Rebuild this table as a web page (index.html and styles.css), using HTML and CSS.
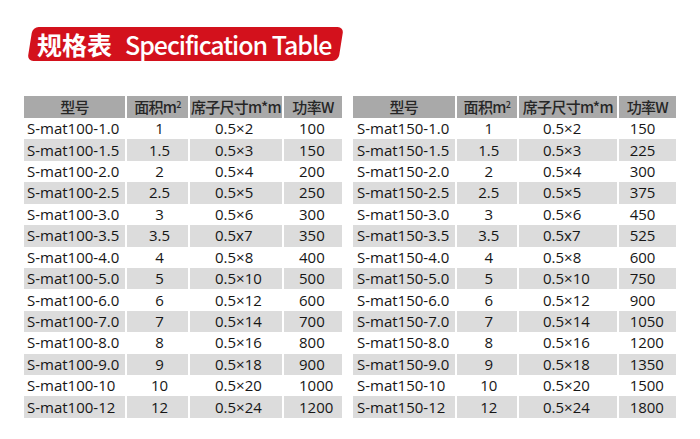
FILE: index.html
```html
<!DOCTYPE html>
<html lang="zh">
<head>
<meta charset="utf-8">
<title>规格表 Specification Table</title>
<link rel="stylesheet" href="styles.css">
</head>
<body>
<div class="page">
  <div class="banner"><span class="banner-text"><span class="zh">规格表</span><span class="en">Specification Table</span></span></div>
  <div class="tables">
    <table class="spec spec-a">
      <colgroup><col class="a1"><col class="a2"><col class="a3"><col class="a4"></colgroup>
      <thead>
        <tr><th>型号</th><th>面积m<sup>2</sup></th><th>席子尺寸m*m</th><th>功率W</th></tr>
      </thead>
      <tbody>
        <tr><td class="m">S-mat100-1.0</td><td class="ar">1</td><td class="sz">0.5×2</td><td class="pw">100</td></tr>
        <tr><td class="m">S-mat100-1.5</td><td class="ar">1.5</td><td class="sz">0.5×3</td><td class="pw">150</td></tr>
        <tr><td class="m">S-mat100-2.0</td><td class="ar">2</td><td class="sz">0.5×4</td><td class="pw">200</td></tr>
        <tr><td class="m">S-mat100-2.5</td><td class="ar">2.5</td><td class="sz">0.5×5</td><td class="pw">250</td></tr>
        <tr><td class="m">S-mat100-3.0</td><td class="ar">3</td><td class="sz">0.5×6</td><td class="pw">300</td></tr>
        <tr><td class="m">S-mat100-3.5</td><td class="ar">3.5</td><td class="sz">0.5x7</td><td class="pw">350</td></tr>
        <tr><td class="m">S-mat100-4.0</td><td class="ar">4</td><td class="sz">0.5×8</td><td class="pw">400</td></tr>
        <tr><td class="m">S-mat100-5.0</td><td class="ar">5</td><td class="sz">0.5×10</td><td class="pw">500</td></tr>
        <tr><td class="m">S-mat100-6.0</td><td class="ar">6</td><td class="sz">0.5×12</td><td class="pw">600</td></tr>
        <tr><td class="m">S-mat100-7.0</td><td class="ar">7</td><td class="sz">0.5×14</td><td class="pw">700</td></tr>
        <tr><td class="m">S-mat100-8.0</td><td class="ar">8</td><td class="sz">0.5×16</td><td class="pw">800</td></tr>
        <tr><td class="m">S-mat100-9.0</td><td class="ar">9</td><td class="sz">0.5×18</td><td class="pw">900</td></tr>
        <tr><td class="m">S-mat100-10</td><td class="ar">10</td><td class="sz">0.5×20</td><td class="pw">1000</td></tr>
        <tr><td class="m">S-mat100-12</td><td class="ar">12</td><td class="sz">0.5×24</td><td class="pw">1200</td></tr>
      </tbody>
    </table>
    <table class="spec spec-b">
      <colgroup><col class="b1"><col class="b2"><col class="b3"><col class="b4"></colgroup>
      <thead>
        <tr><th>型号</th><th>面积m<sup>2</sup></th><th>席子尺寸m*m</th><th>功率W</th></tr>
      </thead>
      <tbody>
        <tr><td class="m">S-mat150-1.0</td><td class="ar">1</td><td class="sz">0.5×2</td><td class="pw">150</td></tr>
        <tr><td class="m">S-mat150-1.5</td><td class="ar">1.5</td><td class="sz">0.5×3</td><td class="pw">225</td></tr>
        <tr><td class="m">S-mat150-2.0</td><td class="ar">2</td><td class="sz">0.5×4</td><td class="pw">300</td></tr>
        <tr><td class="m">S-mat150-2.5</td><td class="ar">2.5</td><td class="sz">0.5×5</td><td class="pw">375</td></tr>
        <tr><td class="m">S-mat150-3.0</td><td class="ar">3</td><td class="sz">0.5×6</td><td class="pw">450</td></tr>
        <tr><td class="m">S-mat150-3.5</td><td class="ar">3.5</td><td class="sz">0.5x7</td><td class="pw">525</td></tr>
        <tr><td class="m">S-mat150-4.0</td><td class="ar">4</td><td class="sz">0.5×8</td><td class="pw">600</td></tr>
        <tr><td class="m">S-mat150-5.0</td><td class="ar">5</td><td class="sz">0.5×10</td><td class="pw">750</td></tr>
        <tr><td class="m">S-mat150-6.0</td><td class="ar">6</td><td class="sz">0.5×12</td><td class="pw">900</td></tr>
        <tr><td class="m">S-mat150-7.0</td><td class="ar">7</td><td class="sz">0.5×14</td><td class="pw">1050</td></tr>
        <tr><td class="m">S-mat150-8.0</td><td class="ar">8</td><td class="sz">0.5×16</td><td class="pw">1200</td></tr>
        <tr><td class="m">S-mat150-9.0</td><td class="ar">9</td><td class="sz">0.5×18</td><td class="pw">1350</td></tr>
        <tr><td class="m">S-mat150-10</td><td class="ar">10</td><td class="sz">0.5×20</td><td class="pw">1500</td></tr>
        <tr><td class="m">S-mat150-12</td><td class="ar">12</td><td class="sz">0.5×24</td><td class="pw">1800</td></tr>
      </tbody>
    </table>
  </div>
</div>
</body>
</html>
```
FILE: styles.css
```css
html, body {
  margin: 0;
  padding: 0;
  background: #ffffff;
}

.page {
  width: 700px;
  height: 439px;
  padding-top: 27px;
  box-sizing: border-box;
  overflow: hidden;
}

.banner {
  margin-left: 30px;
  width: 311px;
  height: 34px;
  background: #d3111c;
  border-radius: 6px;
  transform: skewX(-9deg);
  display: flex;
  align-items: center;
}

.banner-text {
  transform: skewX(9deg);
  display: flex;
  align-items: center;
  padding-left: 7px;
  color: #ffffff;
  font-family: "Noto Sans CJK SC", "Noto Sans", sans-serif;
  font-weight: 700;
  font-size: 25px;
  line-height: 34px;
  white-space: nowrap;
}

.banner-text .zh {
  letter-spacing: 0;
}

.banner-text .en {
  margin-left: 13px;
  font-weight: 500;
  letter-spacing: -1.05px;
}

.tables {
  display: flex;
  gap: 7px;
  margin-top: 35px;
  padding-left: 22px;
}

.spec {
  border-collapse: separate;
  border-spacing: 2px 0;
  table-layout: fixed;
  font-family: "Open Sans", "Noto Sans CJK SC", sans-serif;
  font-size: 15px;
  color: #161616;
}

.spec-a { width: 322px; }
.spec-b { width: 327px; }

.a1 { width: 101px; }
.a2 { width: 61px; }
.a3 { width: 92px; }
.a4 { width: 58px; }

.b1 { width: 101px; }
.b2 { width: 60px; }
.b3 { width: 97px; }
.b4 { width: 57px; }

.spec th {
  height: 22px;
  padding: 0;
  background: #a9a9a9;
  font-family: "Noto Sans CJK SC", sans-serif;
  font-weight: 500;
  font-size: 15px;
  letter-spacing: -0.7px;
  color: #262626;
  text-align: center;
  line-height: 22px;
  white-space: nowrap;
}

.spec th sup {
  font-size: 9px;
  line-height: 0;
  vertical-align: 5px;
}

.spec td {
  height: 21.43px;
  padding: 0;
  line-height: 21px;
  white-space: nowrap;
}

.spec tbody tr:nth-child(even) td {
  background: #dcdcdc;
}

.spec td.m { padding-left: 3px; }
.spec td.ar { text-align: center; padding-left: 4px; }
.spec-a td.sz { padding-left: 25px; }
.spec-b td.sz { padding-left: 24px; }
.spec-a td.pw { padding-left: 15px; }
.spec-b td.pw { padding-left: 11px; }
.spec-b td.m { padding-left: 4px; }
```
